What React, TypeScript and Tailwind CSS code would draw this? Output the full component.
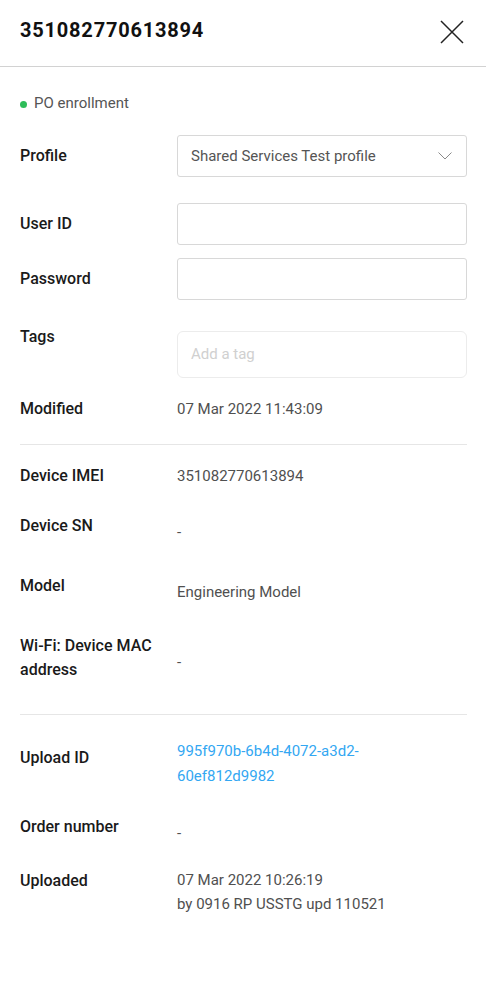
import React from "react";

const Label = ({ children, className = "" }: { children: React.ReactNode; className?: string }) => (
  <div className={`w-[157px] shrink-0 text-[16px] leading-[24px] font-medium text-[#1a1a1a] ${className}`}>{children}</div>
);

const Value = ({
  children,
  className = "",
  link = false,
}: {
  children: React.ReactNode;
  className?: string;
  link?: boolean;
}) => (
  <div className={`flex-1 text-[15px] leading-[24px] ${link ? "text-[#33a7f2]" : "text-[#505050]"} ${className}`}>
    {children}
  </div>
);

export default function App() {
  return (
    <div className="w-[486px] min-h-[1002px] bg-white font-['Roboto',sans-serif]">
      {/* Header */}
      <div className="h-[67px] border-b border-[#d2d2d2] flex items-center justify-between pl-[20px] pr-[22px]">
        <div className="text-[20px] font-bold tracking-[0.8px] text-[#111] leading-[24px] -mt-[6px]">351082770613894</div>
        <svg width="24" height="24" viewBox="0 0 24 24" className="-mt-[2px]">
          <path d="M1 1 L23 23 M23 1 L1 23" stroke="#222" strokeWidth="1.5" fill="none" />
        </svg>
      </div>

      <div className="pl-[20px] pr-[19px]">
        {/* Status */}
        <div className="mt-[26px] flex items-center h-[20px] text-[15px] text-[#555]">
          <span className="w-[7px] h-[7px] rounded-full bg-[#2ebd59] mr-[7px] mt-[2px]" />
          PO enrollment
        </div>

        {/* Profile */}
        <div className="mt-[22px] flex items-center">
          <Label>Profile</Label>
          <div className="flex-1 h-[42px] border border-[#d8d8d8] rounded-[3px] flex items-center justify-between pl-[13px] pr-[14px] text-[15px] text-[#555]">
            <span>Shared Services Test profile</span>
            <svg width="14" height="8" viewBox="0 0 14 8">
              <path d="M0.5 0.5 L7 7 L13.5 0.5" stroke="#8a8a8a" strokeWidth="1" fill="none" />
            </svg>
          </div>
        </div>

        {/* User ID */}
        <div className="mt-[26px] flex items-center">
          <Label>User ID</Label>
          <div className="flex-1 h-[42px] border border-[#d8d8d8] rounded-[3px]" />
        </div>

        {/* Password */}
        <div className="mt-[13px] flex items-center">
          <Label>Password</Label>
          <div className="flex-1 h-[42px] border border-[#d8d8d8] rounded-[3px]" />
        </div>

        {/* Tags */}
        <div className="mt-[25px] flex">
          <Label>Tags</Label>
          <div className="flex-1 pt-[6px]">
            <div className="h-[47px] border border-[#ececec] rounded-[6px] flex items-center pl-[13px] text-[15px] text-[#d0d0d0]">
              Add a tag
            </div>
          </div>
        </div>

        {/* Modified */}
        <div className="mt-[19px] flex">
          <Label>Modified</Label>
          <Value>07 Mar 2022 11:43:09</Value>
        </div>

        <div className="mt-[23px] border-t border-[#e6e6e6]" />

        <div className="mt-[19px] flex">
          <Label>Device IMEI</Label>
          <Value>351082770613894</Value>
        </div>

        <div className="mt-[26px] flex">
          <Label>Device SN</Label>
          <Value className="pt-[6px]">-</Value>
        </div>

        <div className="mt-[30px] flex">
          <Label>Model</Label>
          <Value className="pt-[6px]">Engineering Model</Value>
        </div>

        <div className="mt-[30px] flex">
          <Label>Wi-Fi: Device MAC address</Label>
          <Value className="pt-[16px]">-</Value>
        </div>

        <div className="mt-[32px] border-t border-[#e6e6e6]" />

        <div className="mt-[24px] flex">
          <Label className="pt-[7px]">Upload ID</Label>
          <Value link className="leading-[25px]">
            995f970b-6b4d-4072-a3d2-
            <br />
            60ef812d9982
          </Value>
        </div>

        <div className="mt-[26px] flex">
          <Label>Order number</Label>
          <Value className="pt-[6px]">-</Value>
        </div>

        <div className="mt-[23px] flex">
          <Label className="pt-[1px]">Uploaded</Label>
          <Value>
            07 Mar 2022 10:26:19
            <br />
            by 0916 RP USSTG upd 110521
          </Value>
        </div>
      </div>
    </div>
  );
}
